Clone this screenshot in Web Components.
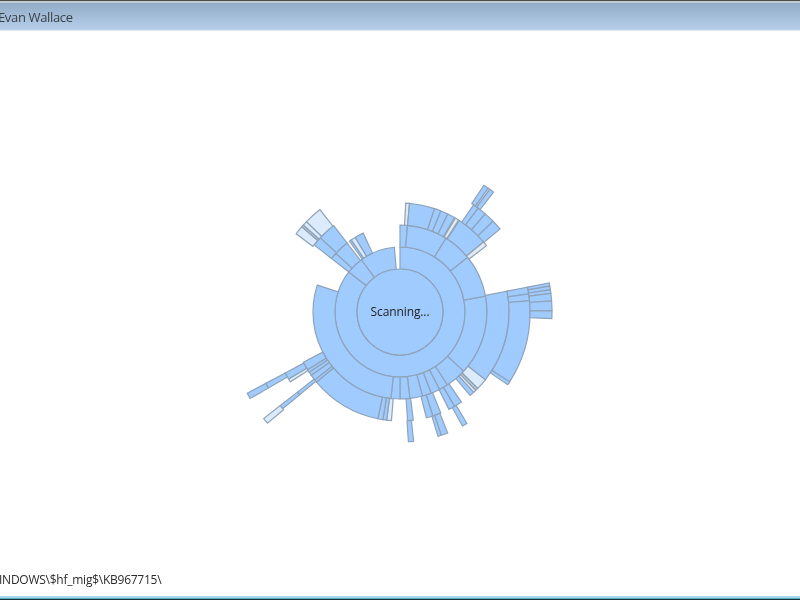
<!DOCTYPE html>
<html><head><meta charset="utf-8"><title>Disk scan</title>
<style>html,body{margin:0;padding:0;width:800px;height:600px;overflow:hidden;background:#fff}</style></head>
<body><app-window><title-bar slot="title">Evan Wallace</title-bar><sun-burst label="Scanning..."></sun-burst><status-bar slot="status">INDOWS\$hf_mig$\KB967715\</status-bar></app-window>
<script>
class AppWindow extends HTMLElement{constructor(){super();this.attachShadow({mode:'open'}).innerHTML=`<style>
:host{display:flex;flex-direction:column;width:800px;height:600px;background:#fff;overflow:hidden;font-family:"Open Sans","Noto Sans",sans-serif;color:#222}
main{flex:1;min-height:0;display:flex}
</style><slot name="title"></slot><main><slot></slot></main><slot name="status"></slot>`}}
class TitleBar extends HTMLElement{constructor(){super();this.attachShadow({mode:'open'}).innerHTML=`<style>
:host{display:flex;align-items:center;height:32px;box-sizing:border-box;flex:none;padding-top:3px;padding-bottom:1px;overflow:hidden;
background:linear-gradient(#4d4d4d 0 1px,#c4c9ce 1px 3px,#92abc6 3px,#b4cde9 29px,#c5d3e0 30px,#f6f9fb 31px,#fff 32px)}
span{margin-left:-2px;font-size:13px;letter-spacing:-.35px;color:#3a3f46;filter:blur(.4px);white-space:nowrap}
</style><span><slot></slot></span>`}}
class StatusBar extends HTMLElement{constructor(){super();this.attachShadow({mode:'open'}).innerHTML=`<style>
:host{display:flex;flex-direction:column;flex:none;height:35px;overflow:hidden}
div{flex:1;display:flex;align-items:center;padding-bottom:2px;white-space:nowrap}
span{margin-left:-1px;font-size:12px;letter-spacing:-.25px;color:#2b2b2b;filter:blur(.4px)}
i{display:block;height:4px;background:linear-gradient(#a6dcec 0 2px,#5da7bd 2px 3px,#17343f 3px)}
</style><div><span><slot></slot></span></div><i></i>`}}
const B='#a0cbff',L='#dcebfb',G='#bcc4cc',P='#e3ebf0';
const R=[43,65,87,109,130,152,173];
const segs=[
[0,0,308,B],[0,308,323.5,B],[0,323.5,355,B],
[1,0,5,B],[1,5,32,B],[1,32,51,B],[1,79.5,133,B],[1,51,79.5,B],[1,133,147,B],[1,147,153,B],[1,153,159,B],[1,159,165,B],[1,165,173.5,B],[1,173.5,180,B],[1,180,186,B],[1,186,288,B],
[1,308,312.5,B],[1,312.5,322.5,B],[1,324.5,326,B],[1,326,329,L],[1,329,335,B],
[2,3,5,P],[2,5,18.5,B],[2,18.5,22,B],[2,22,26,B],[2,26,30,B],[2,30.5,32.5,P],[2,33,50,B],[2,50,52.5,P],
[2,79,128.5,B],[2,128.5,134.5,L],[2,134.5,136,G],[2,136,137.5,L],[2,137.5,140,B],
[2,145.7,150,B],[2,150,153.3,B],[2,158,162.5,B],[2,162.5,166,B],[2,173,176,B],
[2,184.5,187,L],[2,187,189,B],[2,189,191.7,B],[2,191.7,230,B],[2,230,231.5,B],[2,231.5,234.5,B],[2,234.5,236.5,B],[2,236.5,238,B],[2,238,242.5,B],
[2,308,313,B],[2,313,322.5,B],
[3,34.5,37,B],[3,37,41,B],[3,41,45.7,B],[3,45.7,50.3,B],
[3,79,82,B],[3,82,85,B],[3,85,122.5,B],[3,122.5,124,B],
[3,149,151.3,B],[3,158.5,161.5,B],[3,161.5,163,B],[3,174,176.3,B],
[3,230.5,232,B],[3,237.5,239,L],[3,239,242,B],
[3,307,311,L],[3,311,312,G],[3,312,314,L],[3,314,322,L],
[4,33.5,35.5,B],[4,35.5,36.2,P],[4,36.2,38,B],
[4,79,80.2,B],[4,80.2,81.6,B],[4,81.6,83,B],[4,83,85.8,B],[4,85.8,89.5,B],[4,89.5,92.5,B],
[4,230.5,232,B],[4,240,242,B],
[5,230,232,L],[5,240,242,B]
];
const CX=400,CY=312;
const pt=(r,a)=>{const t=a*Math.PI/180;return (CX+r*Math.sin(t)).toFixed(2)+' '+(CY-r*Math.cos(t)).toFixed(2)};
const arc=(r0,r1,a,b)=>{const f=(b-a)>180?1:0;return `M${pt(r0,a)}L${pt(r1,a)}A${r1} ${r1} 0 ${f} 1 ${pt(r1,b)}L${pt(r0,b)}A${r0} ${r0} 0 ${f} 0 ${pt(r0,a)}Z`};
class SunBurst extends HTMLElement{constructor(){super();const paths=segs.map(([i,a,b,c])=>`<path d="${arc(R[i],R[i+1],a,b)}" fill="${c}"/>`).join('');
this.attachShadow({mode:'open'}).innerHTML=`<style>
:host{display:block;flex:1;min-width:0}
svg{display:block;width:800px;height:533px;filter:blur(.45px)}
path,circle{stroke:#8ea3b9;stroke-width:1.2}
text{font:12px "Open Sans","Noto Sans",sans-serif;letter-spacing:-.1px;fill:#222;stroke:none}
</style><svg viewBox="0 32 800 533" role="img" aria-label="Disk usage sunburst">${paths}<circle cx="${CX}" cy="${CY}" r="43" fill="${B}"/><text x="${CX}" y="316" text-anchor="middle">${this.getAttribute('label')}</text></svg>`}}
customElements.define('app-window',AppWindow);customElements.define('title-bar',TitleBar);customElements.define('status-bar',StatusBar);customElements.define('sun-burst',SunBurst);
</script></body></html>
